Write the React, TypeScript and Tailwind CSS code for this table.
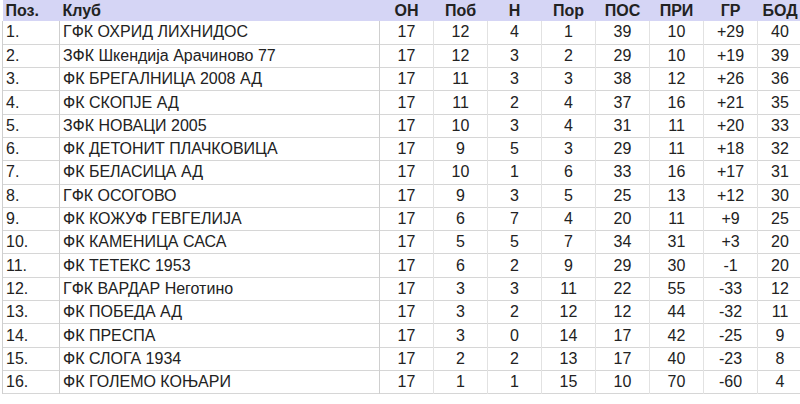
import React from "react";

const rows: (string | number)[][] = [
  ["1.", "ГФК ОХРИД ЛИХНИДОС", 17, 12, 4, 1, 39, 10, "+29", 40],
  ["2.", "ЗФК Шкендија Арачиново 77", 17, 12, 3, 2, 29, 10, "+19", 39],
  ["3.", "ФК БРЕГАЛНИЦА 2008 АД", 17, 11, 3, 3, 38, 12, "+26", 36],
  ["4.", "ФК СКОПЈЕ АД", 17, 11, 2, 4, 37, 16, "+21", 35],
  ["5.", "ЗФК НОВАЦИ 2005", 17, 10, 3, 4, 31, 11, "+20", 33],
  ["6.", "ФК ДЕТОНИТ ПЛАЧКОВИЦА", 17, 9, 5, 3, 29, 11, "+18", 32],
  ["7.", "ФК БЕЛАСИЦА АД", 17, 10, 1, 6, 33, 16, "+17", 31],
  ["8.", "ГФК ОСОГОВО", 17, 9, 3, 5, 25, 13, "+12", 30],
  ["9.", "ФК КОЖУФ ГЕВГЕЛИЈА", 17, 6, 7, 4, 20, 11, "+9", 25],
  ["10.", "ФК КАМЕНИЦА САСА", 17, 5, 5, 7, 34, 31, "+3", 20],
  ["11.", "ФК ТЕТЕКС 1953", 17, 6, 2, 9, 29, 30, "-1", 20],
  ["12.", "ГФК ВАРДАР Неготино", 17, 3, 3, 11, 22, 55, "-33", 12],
  ["13.", "ФК ПОБЕДА АД", 17, 3, 2, 12, 12, 44, "-32", 11],
  ["14.", "ФК ПРЕСПА", 17, 3, 0, 14, 17, 42, "-25", 9],
  ["15.", "ФК СЛОГА 1934", 17, 2, 2, 13, 17, 40, "-23", 8],
  ["16.", "ФК ГОЛЕМО КОЊАРИ", 17, 1, 1, 15, 10, 70, "-60", 4],
];

const headers = ["Поз.", "Клуб", "ОН", "Поб", "Н", "Пор", "ПОС", "ПРИ", "ГР", "БОД"];
const widths = ["w-[57px]", "w-[320px]", "w-[54px]", "w-[54px]", "w-[54px]", "w-[54px]", "w-[54px]", "w-[54px]", "w-[54px]", "w-[45px]"];

export default function App() {
  return (
    <div className="h-[404px] w-[800px] bg-white pl-[2px] font-['Liberation_Sans',Arial,sans-serif] text-[#222]">
      <table className="w-[798px] table-fixed border-collapse">
        <colgroup>
          {widths.map((w, i) => (
            <col key={i} className={w} />
          ))}
        </colgroup>
        <thead>
          <tr className="h-[21px] bg-[#d5d5f5]">
            {headers.map((h, i) => (
              <th
                key={h}
                className={
                  i < 2
                    ? "pl-[3px] text-left text-[16px] font-bold leading-none"
                    : "text-center text-[16px] font-bold leading-none"
                }
              >
                {h}
              </th>
            ))}
          </tr>
        </thead>
        <tbody>
          {rows.map((r) => (
            <tr key={r[0] as string} className="h-[23.3px] border-b border-[#d6d6d6]">
              {r.map((c, i) => (
                <td
                  key={i}
                  className={
                    i === 0
                      ? "border-l border-r border-[#cfcfcf] pl-[3px] text-left text-[16px] leading-none"
                      : i === 1
                        ? "border-r border-[#cfcfcf] pl-[3px] text-left text-[16px] leading-none"
                        : "border-r border-[#e2e2e2] text-center text-[16px] leading-none"
                  }
                >
                  {c}
                </td>
              ))}
            </tr>
          ))}
        </tbody>
      </table>
    </div>
  );
}
